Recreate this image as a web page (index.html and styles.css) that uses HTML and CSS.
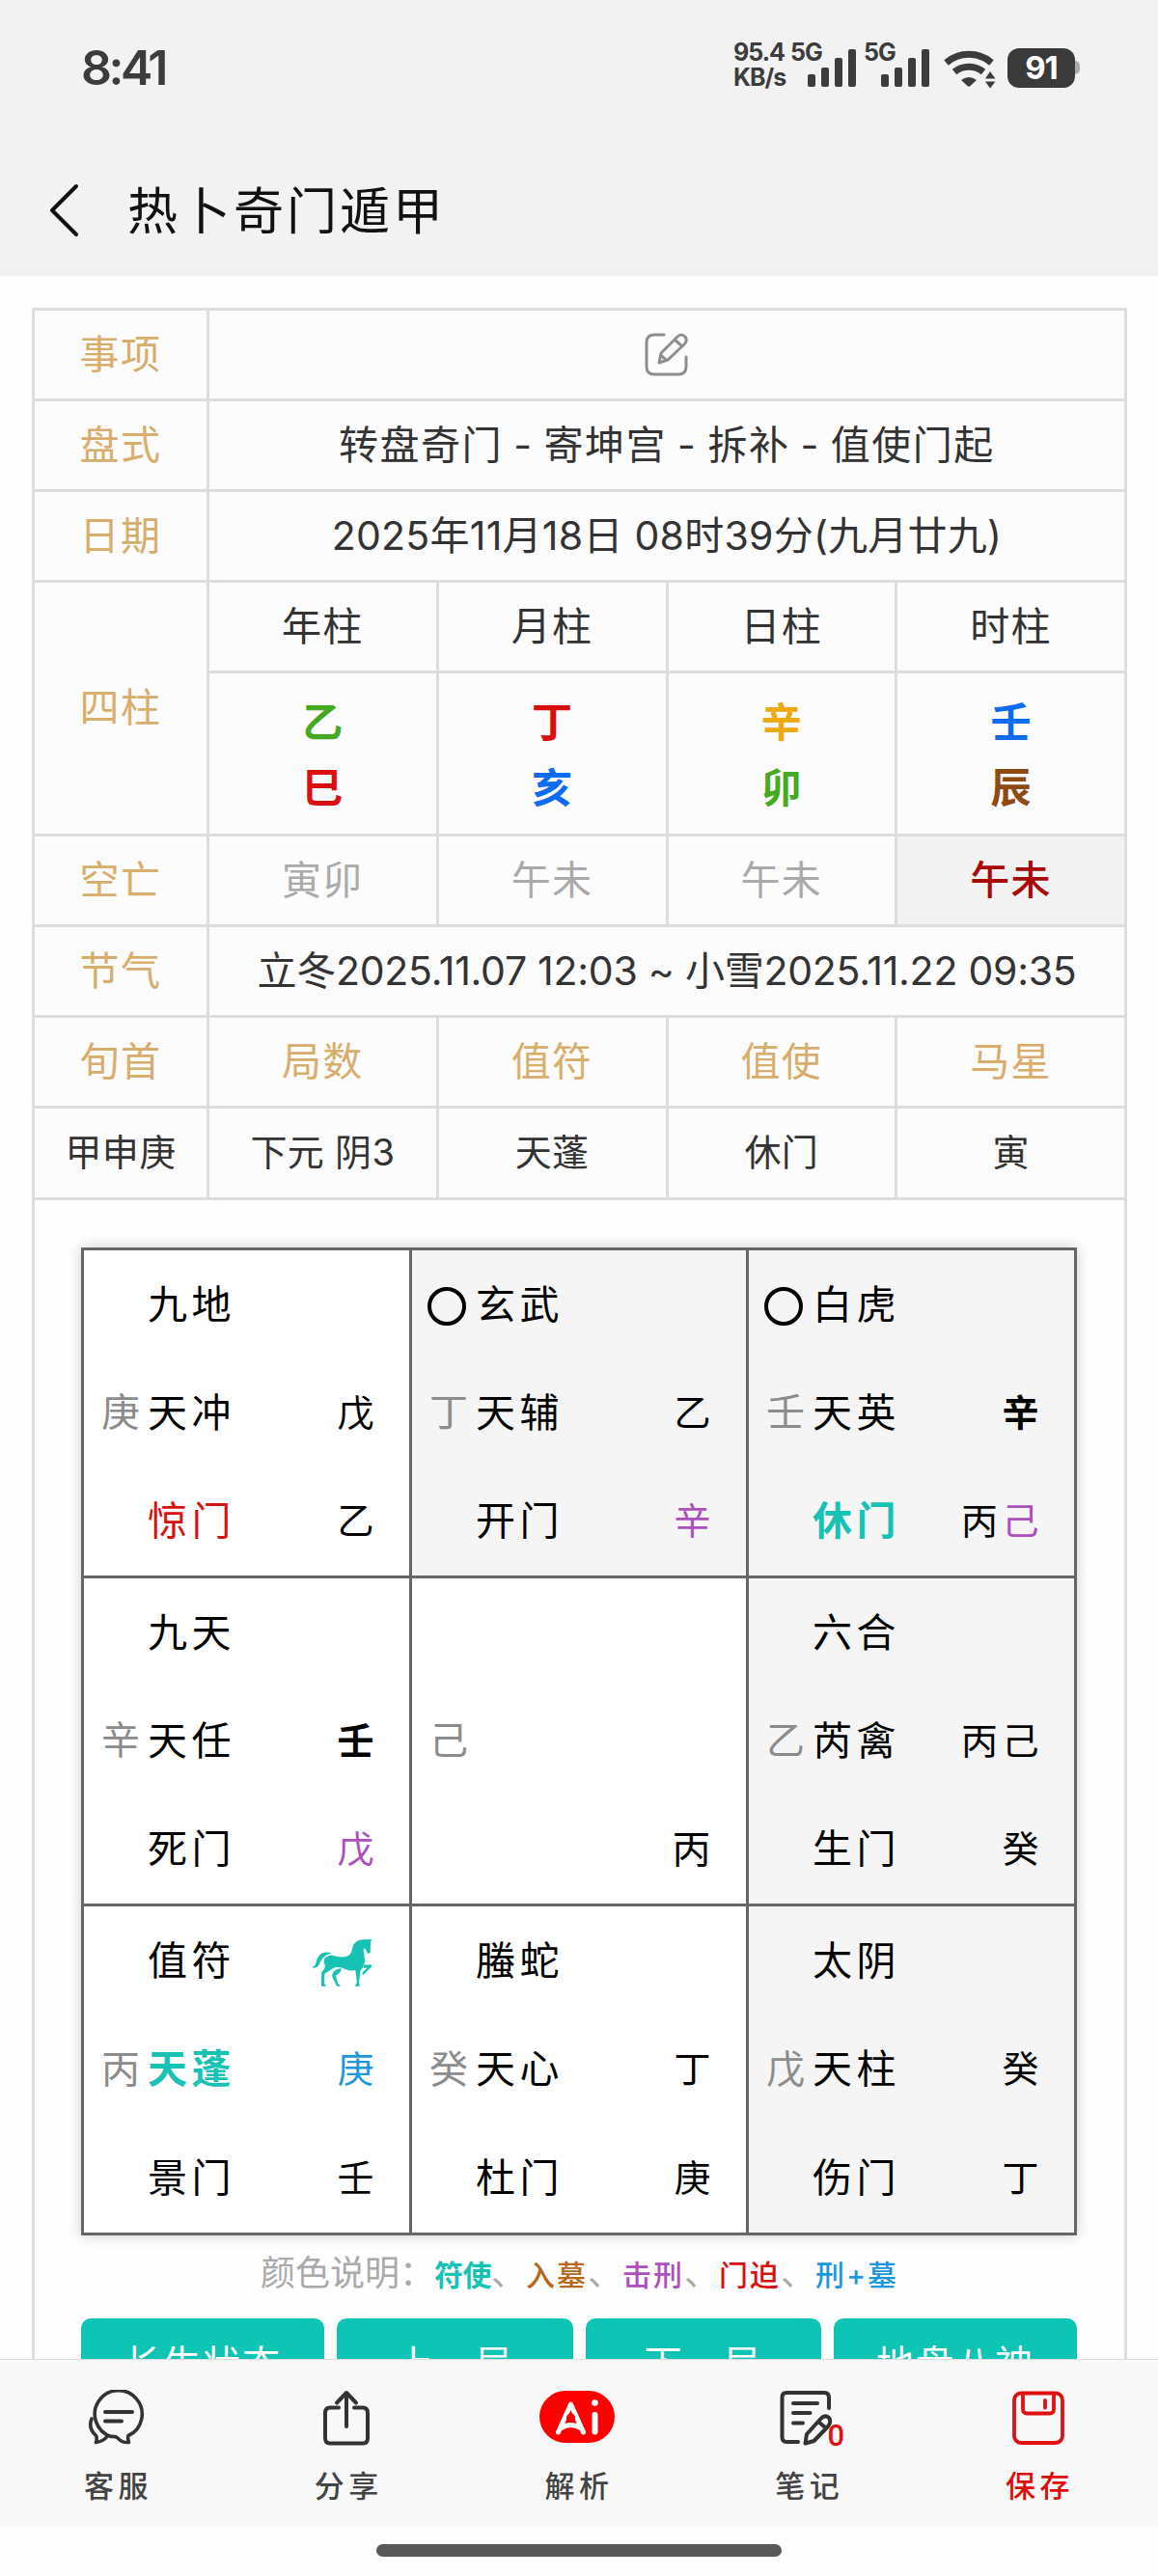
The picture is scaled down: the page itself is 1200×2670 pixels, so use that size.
FILE: index.html
```html
<!DOCTYPE html>
<html lang="zh-CN">
<head>
    <meta charset="UTF-8">
    <meta name="viewport" content="width=device-width, initial-scale=1.0">
    <title>热卜奇门遁甲</title>
    <link rel="stylesheet" href="styles.css">
</head>
<body>
    <header class="header">
        <div class="status-bar">
            <span class="time">8:41</span>
            <div class="status-right">
                <div class="speed"><span>95.4</span><span class="unit">KB/s</span></div>
                <div class="signal">
                    <span>5G</span>
                    <svg width="50" height="40" viewBox="0 0 50 40" fill="#3c3c3c">
                        <rect x="0" y="26" width="8" height="13" rx="2"/>
                        <rect x="14" y="19" width="8" height="20" rx="2"/>
                        <rect x="28" y="9" width="8" height="30" rx="2"/>
                        <rect x="42" y="0" width="8" height="39" rx="2"/>
                    </svg>
                </div>
                <div class="signal second">
                    <span>5G</span>
                    <svg width="50" height="40" viewBox="0 0 50 40" fill="#3c3c3c">
                        <rect x="0" y="26" width="8" height="13" rx="2"/>
                        <rect x="14" y="19" width="8" height="20" rx="2"/>
                        <rect x="28" y="9" width="8" height="30" rx="2"/>
                        <rect x="42" y="0" width="8" height="39" rx="2"/>
                    </svg>
                </div>
                <svg class="wifi" width="54" height="40" viewBox="0 0 54 40">
                    <path d="M2.500 13 A36 36 0 0 1 49.500 13" fill="none" stroke="#3c3c3c" stroke-width="7"/>
                    <path d="M11 22.500 A24 24 0 0 1 41 22.500" fill="none" stroke="#3c3c3c" stroke-width="7"/>
                    <path d="M18 31 Q26 25 34 31 L27.500 37 Q26 38.500 24.500 37Z" fill="#3c3c3c"/>
                    <path d="M43 29.500 L48 22 L53.500 29.500Z M43 32.500 H53.500 L48 39.500Z" fill="#3c3c3c"/>
                </svg>
                <div class="battery">91</div>
                <i class="battery-head"></i>
            </div>
        </div>
        <div class="nav">
            <svg class="back" width="32" height="58" viewBox="0 0 32 58" fill="none" stroke="#111" stroke-width="4" stroke-linecap="round" stroke-linejoin="round"><path d="M28 4 L3 29 L28 54"/></svg>
            <h1>热卜奇门遁甲</h1>
        </div>
    </header>

    <main class="content">
        <div class="info">
            <div class="cell gold">事项</div>
            <div class="cell wide">
                <svg width="46" height="46" viewBox="0 0 46 46" fill="none" stroke="#8e8e8e" stroke-width="3" stroke-linecap="round" stroke-linejoin="round">
                    <path d="M20 2 H10 Q2 2 2 10 V35 Q2 43 10 43 H35 Q43 43 43 35 V25"/>
                    <path d="M34 4 Q38 0 42 4 Q45 8 41 12 L24 28 L15 31 L17 21Z M31 7 L39 14 M18 24 L22 28"/>
                </svg>
            </div>

            <div class="cell gold">盘式</div>
            <div class="cell wide method">转盘奇门 - 寄坤宫 - 拆补 - 值使门起</div>

            <div class="cell gold">日期</div>
            <div class="cell wide date">2025年11月18日 08时39分(九月廿九)</div>

            <div class="cell gold pillars">四柱</div>
            <div class="cell">年柱</div>
            <div class="cell">月柱</div>
            <div class="cell">日柱</div>
            <div class="cell">时柱</div>
            <div class="cell ganzhi"><span class="wood">乙</span><span class="fire">巳</span></div>
            <div class="cell ganzhi"><span class="fire">丁</span><span class="water">亥</span></div>
            <div class="cell ganzhi"><span class="metal">辛</span><span class="wood">卯</span></div>
            <div class="cell ganzhi"><span class="water">壬</span><span class="earth">辰</span></div>

            <div class="cell gold">空亡</div>
            <div class="cell gray">寅卯</div>
            <div class="cell gray">午未</div>
            <div class="cell gray">午未</div>
            <div class="cell active">午未</div>

            <div class="cell gold">节气</div>
            <div class="cell wide term">立冬2025.11.07 12:03 ~ 小雪2025.11.22 09:35</div>

            <div class="cell gold">旬首</div>
            <div class="cell gold">局数</div>
            <div class="cell gold">值符</div>
            <div class="cell gold">值使</div>
            <div class="cell gold">马星</div>

            <div class="cell small">甲申庚</div>
            <div class="cell small">下元 阴3</div>
            <div class="cell small">天蓬</div>
            <div class="cell small">休门</div>
            <div class="cell small">寅</div>
        </div>

        <div class="pan">
            <div class="palaces">
                <div class="palace">
                    <div class="line"><span class="hidden-gan"></span><span class="name">九地</span></div>
                    <div class="line"><span class="hidden-gan">庚</span><span class="name">天冲</span><span class="gan">戊</span></div>
                    <div class="line"><span class="hidden-gan"></span><span class="name po">惊门</span><span class="gan">乙</span></div>
                </div>
                <div class="palace shade">
                    <div class="line"><span class="hidden-gan"><i class="kong"></i></span><span class="name">玄武</span></div>
                    <div class="line"><span class="hidden-gan">丁</span><span class="name">天辅</span><span class="gan">乙</span></div>
                    <div class="line"><span class="hidden-gan"></span><span class="name">开门</span><span class="gan xing">辛</span></div>
                </div>
                <div class="palace shade">
                    <div class="line"><span class="hidden-gan"><i class="kong"></i></span><span class="name">白虎</span></div>
                    <div class="line"><span class="hidden-gan">壬</span><span class="name">天英</span><span class="gan bold">辛</span></div>
                    <div class="line"><span class="hidden-gan"></span><span class="name fu">休门</span><span class="gan">丙<span class="xing">己</span></span></div>
                </div>
                <div class="palace">
                    <div class="line"><span class="hidden-gan"></span><span class="name">九天</span></div>
                    <div class="line"><span class="hidden-gan">辛</span><span class="name">天任</span><span class="gan bold">壬</span></div>
                    <div class="line"><span class="hidden-gan"></span><span class="name">死门</span><span class="gan xing">戊</span></div>
                </div>
                <div class="palace">
                    <div class="line"></div>
                    <div class="line"><span class="hidden-gan">己</span></div>
                    <div class="line"><span class="gan center">丙</span></div>
                </div>
                <div class="palace shade">
                    <div class="line"><span class="hidden-gan"></span><span class="name">六合</span></div>
                    <div class="line"><span class="hidden-gan">乙</span><span class="name">芮禽</span><span class="gan">丙己</span></div>
                    <div class="line"><span class="hidden-gan"></span><span class="name">生门</span><span class="gan">癸</span></div>
                </div>
                <div class="palace">
                    <div class="line">
                        <span class="hidden-gan"></span><span class="name">值符</span>
                        <svg class="horse" width="63" height="49" viewBox="0 0 63 49" fill="#15c2b4">
                            <path d="M62.500 .3 L61 3 L60.700 13.700 L58 15.300 L55.700 10 L53.500 9.500 L54.600 17.700 L55.300 23.300 L52.800 29.500 L50.400 33 L49 45.500 L50 48.700 H45 L46.800 44.300 L45.300 32 Q40 34 31 29.500 Q24 28 20 31.500 L13.500 35.500 L13 45.500 L15 48.700 H10 L10.200 34 Q15.500 29 13 25 Q11 18 21 16.500 Q32 20.500 39 16.500 Q42 13 42.500 8 Q45 .5 54 .3Z"/>
                            <path d="M20.700 14.500 Q13 12 8.500 16 Q5 20 4 26 Q2.500 28.500 0 29 Q4 31 7.500 27 Q10.500 16.500 20.700 14.500Z"/>
                            <path d="M30.500 30 Q31 35 25 37.500 L27 45.500 L30 48.700 H26 L21 38 Q21.500 31.500 30.500 30Z"/>
                            <path d="M54 26.500 H62 V28.500 L53 37.500 L52.500 34.500 L57.500 29.500 L53.500 30Z"/>
                        </svg>
                    </div>
                    <div class="line"><span class="hidden-gan">丙</span><span class="name fu">天蓬</span><span class="gan xingmu">庚</span></div>
                    <div class="line"><span class="hidden-gan"></span><span class="name">景门</span><span class="gan">壬</span></div>
                </div>
                <div class="palace">
                    <div class="line"><span class="hidden-gan"></span><span class="name">螣蛇</span></div>
                    <div class="line"><span class="hidden-gan">癸</span><span class="name">天心</span><span class="gan">丁</span></div>
                    <div class="line"><span class="hidden-gan"></span><span class="name">杜门</span><span class="gan">庚</span></div>
                </div>
                <div class="palace shade">
                    <div class="line"><span class="hidden-gan"></span><span class="name">太阴</span></div>
                    <div class="line"><span class="hidden-gan">戊</span><span class="name">天柱</span><span class="gan">癸</span></div>
                    <div class="line"><span class="hidden-gan"></span><span class="name">伤门</span><span class="gan">丁</span></div>
                </div>
            </div>

            <div class="legend">颜色说明：<b class="fu">符使</b>、<b class="mu">入墓</b>、<b class="xing">击刑</b>、<b class="po">门迫</b>、<b class="xingmu">刑+墓</b></div>

            <div class="buttons">
                <button>长生状态</button>
                <button>上一局</button>
                <button>下一局</button>
                <button>地盘八神</button>
            </div>
        </div>
    </main>

    <nav class="tabbar">
        <a class="tab">
            <svg width="60" height="58" viewBox="0 0 60 58" fill="none" stroke="#333" stroke-width="3.600" stroke-linecap="round" stroke-linejoin="round">
                <path d="M43 47.500 A24.500 24.500 0 1 0 25 48.500 Q30 48 32 50 Q36 55 43.500 54.500 Q42 50 43 47.500Z"/>
                <path d="M5 30 Q1 40 9.500 47.500 Q11 50 9.500 54.500 Q17 53.500 21 48.500"/>
                <path d="M19 23 H47 M19 32.500 H36" stroke-width="4"/>
            </svg>
            <span>客服</span>
        </a>
        <a class="tab">
            <svg width="60" height="58" viewBox="0 0 60 58" fill="none" stroke="#333" stroke-width="4" stroke-linecap="round" stroke-linejoin="round">
                <path d="M22 18.500 H13 Q8 18.500 8 24 V50 Q8 55.500 13 55.500 H47 Q52 55.500 52 50 V24 Q52 18.500 47 18.500 H38"/>
                <path d="M30 38 V4 M20 13.500 L30 3 L40 13.500"/>
            </svg>
            <span>分享</span>
        </a>
        <a class="tab">
            <svg class="ai" width="78" height="58" viewBox="0 0 78 58" fill="none" stroke-linecap="round" stroke-linejoin="round">
                <rect x="0" y="1" width="78" height="54" rx="27" fill="#fe0000"/>
                <path d="M19.500 44 L32.500 15 L45.500 44 M22 40 Q32.500 33 43 40" stroke="#fff" stroke-width="5"/>
                <circle cx="32.500" cy="29" r="4.500" fill="#fe0000"/>
                <path d="M57.500 26 V43.500" stroke="#fff" stroke-width="6"/>
                <circle cx="57.500" cy="13.500" r="3.300" fill="#fff"/>
            </svg>
            <span>解析</span>
        </a>
        <a class="tab">
            <svg width="60" height="58" viewBox="0 0 60 58" fill="none" stroke="#333" stroke-width="4" stroke-linecap="round" stroke-linejoin="round">
                <path d="M20 54 H8 Q3.500 54 3.500 49 V8 Q3.500 3 8 3 H47 Q52 3 52 8 V19"/>
                <path d="M15 14 H40 M15 24 H32.500 M15 34.500 H25"/>
                <path d="M43.500 30 Q48 25.500 52 29 Q55 33 51 38 L36.500 53 L27.500 55.500 L29 46Z M41 33 L48 39"/>
            </svg>
            <em class="badge">0</em>
            <span>笔记</span>
        </a>
        <a class="tab save">
            <svg width="60" height="58" viewBox="0 0 60 58" fill="none" stroke="#e01010" stroke-width="3.800" stroke-linecap="round" stroke-linejoin="round">
                <rect x="5" y="3.500" width="50" height="51.500" rx="7"/>
                <path d="M14 4 V20 Q14 24.500 18.500 24.500 H41.500 Q46 24.500 46 20 V4 M37 11 V18.500"/>
            </svg>
            <span>保存</span>
        </a>
    </nav>
    <div class="home-bar"><i></i></div>
</body>
</html>
```

FILE: styles.css
```css
* {
    box-sizing: border-box;
}

body {
    margin: 0;
    height: 2670px;
    display: flex;
    flex-direction: column;
    overflow: hidden;
    background: #fefefe;
    color: #333;
    font-family: Inter, "Noto Sans CJK SC", sans-serif;
    font-size: 41px;
    line-height: 1.2;
}

i, em {
    font-style: normal;
}

/* 顶部 */
.header {
    flex: none;
    height: 286px;
    background: #f2f2f2;
}

.status-bar {
    height: 140px;
    padding: 0 81px 0 84px;
    display: flex;
    justify-content: space-between;
    align-items: center;
    color: #3c3c3c;
}

.time {
    font-size: 50px;
    font-weight: 600;
    letter-spacing: -3.5px;
}

.status-right {
    display: flex;
    align-items: flex-start;
    height: 48px;
    margin-top: -4px;
    font-size: 25px;
    font-weight: 700;
    line-height: 26px;
    letter-spacing: -1px;
}

.speed {
    width: 59px;
    margin-top: -3px;
    display: flex;
    flex-direction: column;
}

.signal {
    width: 68px;
    display: flex;
}

.signal span {
    width: 18px;
    margin-top: -3px;
    white-space: nowrap;
}

.signal svg {
    flex: none;
    margin-top: 7px;
}

.signal.second {
    margin-left: 8px;
}

.wifi {
    margin: 8px 0 0 15px;
}

.battery {
    width: 70px;
    height: 41px;
    margin: 6px 0 0 12px;
    border-radius: 12px;
    background: #3a3a3a;
    color: #fff;
    font-size: 33px;
    line-height: 41px;
    text-align: center;
}

.battery-head {
    width: 5px;
    height: 14px;
    margin-top: 19px;
    border-radius: 0 5px 5px 0;
    background: #aaa;
}

.nav {
    height: 156px;
    padding-left: 51px;
    display: flex;
    align-items: center;
}

.nav h1 {
    margin: 4px 0 0 49px;
    font-size: 52px;
    font-weight: 400;
    letter-spacing: 3px;
    line-height: 152px;
    color: #111;
}

/* 信息表 */
.content {
    flex: 1;
    min-height: 0;
    padding: 33px 32px 0 33px;
    overflow: hidden;
}

.info {
    display: grid;
    grid-template-columns: 178px repeat(4, 1fr);
    grid-template-rows: 91px 91px 91px 91px 166px 91px 91px 91px 92px;
    gap: 3px;
    padding: 3px;
    background: #ddd;
}

.cell {
    display: flex;
    justify-content: center;
    align-items: center;
    background: #fcfcfc;
    letter-spacing: 1.5px;
    white-space: nowrap;
}

.wide {
    grid-column: span 4;
}

.pillars {
    grid-row: span 2;
}

.gold {
    color: #d9ae6d;
}

.gray {
    color: #aaa;
}

.active {
    background: #f2f2f2;
    color: #a80a08;
    font-weight: 500;
}

.small {
    font-size: 38px;
    letter-spacing: 0.3px;
}

.method {
    word-spacing: -2px;
}

.date {
    letter-spacing: 0.25px;
}

.term {
    letter-spacing: -0.25px;
}

.ganzhi {
    flex-direction: column;
    padding-top: 4px;
    font-size: 42px;
    font-weight: 700;
    line-height: 68px;
    letter-spacing: 0;
}

.wood { color: #45a922; }
.fire { color: #d9100f; }
.water { color: #0a6cf2; }
.metal { color: #eea90c; }
.earth { color: #8f4a12; }

/* 九宫盘 */
.pan {
    padding: 49px 49px 0 48px;
    border: 3px solid #ddd;
    border-width: 0 3px;
}

.palaces {
    display: grid;
    grid-template-columns: 337px 346px 337px;
    grid-template-rows: 337px 337px 338px;
    gap: 3px;
    padding: 3px;
    background: #666;
    box-shadow: 0 0 14px rgba(0, 0, 0, 0.2);
}

.palace {
    display: grid;
    grid-template-rows: repeat(3, 1fr);
    background: #fff;
    color: #000;
}

.shade {
    background: #f5f5f5;
}

.line {
    display: flex;
    align-items: center;
    padding: 0 32px 0 18px;
}

.hidden-gan {
    flex: 0 0 48px;
    color: #8c8c8c;
    font-size: 40px;
}

.kong {
    display: block;
    width: 40px;
    height: 40px;
    margin: 3px 0 0 -2px;
    border: 4px solid #000;
    border-radius: 50%;
}

.name {
    letter-spacing: 4.5px;
}

.gan {
    margin-left: auto;
    font-size: 38px;
    letter-spacing: 4.5px;
}

.gan.center {
    font-size: 40px;
}

.bold {
    font-weight: 600;
}

.horse {
    margin: 4px 6px 0 auto;
}

.fu {
    color: #15c2b4;
    font-weight: 700;
}

.mu { color: #b9681b; }
.xing { color: #ae4fc0; }
.po { color: #d9100f; }
.xingmu { color: #1c96dc; }

.legend {
    height: 86px;
    padding-left: 186px;
    line-height: 78px;
    font-size: 36px;
    color: #aaa;
    white-space: nowrap;
}

.legend b {
    font-size: 30px;
    font-weight: 500;
    letter-spacing: 2px;
}

.legend .fu {
    font-weight: 700;
    letter-spacing: -0.5px;
}

.buttons {
    display: grid;
    grid-template-columns: 252px 245px 244px 252px;
    gap: 13px;
}

.buttons button {
    height: 94px;
    padding: 0;
    border: none;
    border-radius: 10px;
    background: #0ec4b5;
    color: #fff;
    font-family: inherit;
    font-size: 39px;
    line-height: 94px;
    letter-spacing: 2px;
}

/* 底部菜单 */
.tabbar {
    flex: none;
    height: 173px;
    padding: 0 5px 0 1px;
    display: grid;
    grid-template-columns: repeat(5, 1fr);
    border-top: 1px solid #ddd;
    background: #f8f8f8;
}

.tab {
    position: relative;
    display: flex;
    flex-direction: column;
    align-items: center;
    padding-top: 31px;
    color: #444;
    font-size: 31px;
    font-weight: 500;
}

.tab span {
    margin-top: 22px;
    padding-left: 4px;
    line-height: 40px;
    letter-spacing: 4.5px;
}

.tab.save {
    color: #dd0c0c;
}

.badge {
    position: absolute;
    left: 140px;
    top: 63px;
    color: #e01010;
    font-family: Roboto, sans-serif;
    font-size: 31px;
    font-weight: 500;
    line-height: 32px;
}

.home-bar {
    flex: none;
    height: 52px;
    display: flex;
    justify-content: center;
    padding-top: 19px;
}

.home-bar i {
    width: 420px;
    height: 13px;
    border-radius: 7px;
    background: #585858;
}
```
